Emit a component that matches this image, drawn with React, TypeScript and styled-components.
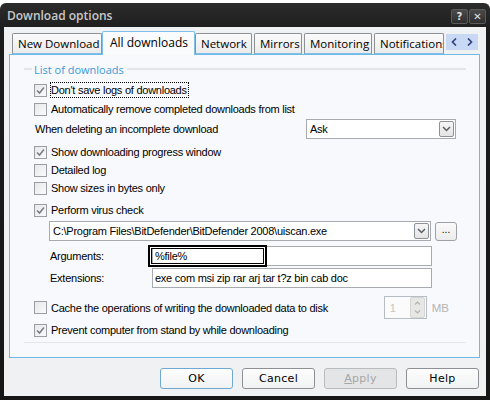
import React from "react";
import styled, { createGlobalStyle } from "styled-components";

const GlobalStyle = createGlobalStyle`
  html, body { margin: 0; padding: 0; background: #ffffff; }
  body {
    font-family: "Liberation Sans", Arial, sans-serif;
    font-size: 11px;
    letter-spacing: -0.25px;
    color: #000;
  }
  #root { width: 490px; height: 400px; overflow: hidden; }
`;

const Backdrop = styled.div`
  width: 490px;
  height: 400px;
  padding-top: 3px;
  box-sizing: border-box;
  background: #ffffff;
`;

const Window = styled.div`
  height: 397px;
  box-sizing: border-box;
  display: flex;
  flex-direction: column;
  background: linear-gradient(#2c2c2c, #1b1b1b 30px, #161616);
  border-radius: 6px 6px 0 0;
  padding: 0 4px 4px 4px;
`;

const TitleBar = styled.div`
  height: 24px;
  display: flex;
  align-items: center;
  justify-content: space-between;
`;

const Title = styled.span`
  font-family: "Open Sans", "Noto Sans", sans-serif;
  font-weight: 600;
  font-size: 12px;
  letter-spacing: 0;
  color: #c9c9c9;
  padding-left: 3px;
`;

const Caption = styled.div`
  display: flex;
  gap: 1px;
  padding-top: 2px;
`;

const CaptionButton = styled.div`
  width: 17px;
  height: 15px;
  box-sizing: border-box;
  border: 1px solid #5a5a5a;
  border-radius: 2px;
  background: linear-gradient(#4a4a4a, #2e2e2e);
  color: #e0e0e0;
  font-family: "DejaVu Sans", sans-serif;
  font-size: 10px;
  font-weight: bold;
  letter-spacing: 0;
  display: flex;
  align-items: center;
  justify-content: center;
`;

const Client = styled.div`
  flex: 1;
  background: #f0f1f3;
  padding: 4px 6px 0 5px;
  display: flex;
  flex-direction: column;
`;

const TabStrip = styled.div`
  height: 23px;
  display: flex;
  align-items: flex-end;
  padding-left: 3px;
  position: relative;
  z-index: 1;
`;

const Tab = styled.div<{ $active?: boolean; $width: number }>`
  width: ${(p) => p.$width}px;
  height: ${(p) => (p.$active ? 24 : 21)}px;
  box-sizing: border-box;
  margin-right: ${(p) => (p.$active ? 0 : 2)}px;
  margin-left: ${(p) => (p.$active ? -2 : 0)}px;
  margin-bottom: ${(p) => (p.$active ? -1 : 0)}px;
  border: 1px solid ${(p) => (p.$active ? "#7ec0ea" : "#8d9196")};
  border-bottom: ${(p) => (p.$active ? "none" : "1px solid #7ec0ea")};
  border-radius: 2px 2px 0 0;
  background: ${(p) =>
    p.$active ? "#fafbfd" : "linear-gradient(#fbfbfb, #ebebeb)"};
  font-family: "Open Sans", "Noto Sans", sans-serif;
  font-size: ${(p) => (p.$active ? 12 : 11.5)}px;
  letter-spacing: 0;
  display: flex;
  align-items: ${(p) => (p.$active ? "flex-start" : "center")};
  padding: ${(p) => (p.$active ? "2px 0 0 7px" : "0 0 0 5px")};
  white-space: nowrap;
  overflow: hidden;
  flex-shrink: 0;
`;

const TabScroll = styled.div`
  width: 32px;
  height: 16px;
  margin-bottom: 4px;
  background: #c9d9f5;
  display: flex;
  align-items: center;
  justify-content: space-around;
  flex-shrink: 0;
`;

const Panel = styled.div`
  height: 304px;
  box-sizing: border-box;
  border: 1px solid #6fb9e8;
  background: #f8f9fc;
  padding: 7px 13px 0 14px;
`;

const Group = styled.div`
  border-bottom: 1px solid #e3e5e8;
  padding-bottom: 3px;
`;

const Legend = styled.div`
  height: 14px;
  display: flex;
  align-items: center;
  color: #3a9ad9;
  font-family: "Open Sans", "Noto Sans", sans-serif;
  font-size: 11px;
  letter-spacing: 0;
`;

const LegendLine = styled.div<{ $grow?: boolean }>`
  height: 2px;
  background: #e2e4e7;
  width: 8px;
  flex: ${(p) => (p.$grow ? 1 : "none")};
  margin: ${(p) => (p.$grow ? "0 0 0 3px" : "0 2px 0 0")};
`;

const Body = styled.div`
  padding: 5px 0 0 10px;
  display: flex;
  flex-direction: column;
`;

const Row = styled.div<{ $h?: number; $mt?: number; $indent?: number; $pr?: number }>`
  height: ${(p) => p.$h ?? 18}px;
  margin-top: ${(p) => p.$mt ?? 0}px;
  padding-left: ${(p) => p.$indent ?? 0}px;
  padding-right: ${(p) => p.$pr ?? 0}px;
  display: flex;
  align-items: center;
  position: relative;
`;

const Box = styled.span`
  width: 13px;
  height: 13px;
  box-sizing: border-box;
  border: 1px solid #9a9ea3;
  background: linear-gradient(135deg, #e6e8ea, #fafafa);
  display: inline-flex;
  align-items: center;
  justify-content: center;
  margin-right: 3px;
  flex-shrink: 0;
`;

const Label = styled.span<{ $focus?: boolean; $w?: number }>`
  border: 1px ${(p) => (p.$focus ? "dotted #000" : "solid transparent")};
  padding: 0 1px 0 0;
  line-height: 14px;
  white-space: nowrap;
  width: ${(p) => (p.$w ? `${p.$w}px` : "auto")};
  flex-shrink: 0;
`;

const Spacer = styled.div`
  flex: 1;
`;

const Combo = styled.div<{ $w: number }>`
  width: ${(p) => p.$w}px;
  height: 20px;
  box-sizing: border-box;
  border: 1px solid #a7abb0;
  background: #fff;
  display: flex;
  align-items: center;
  padding-left: 3px;
  white-space: nowrap;
  overflow: hidden;
`;

const ComboText = styled.span`
  flex: 1;
  overflow: hidden;
`;

const DropButton = styled.span`
  width: 15px;
  height: 16px;
  box-sizing: border-box;
  margin-right: 1px;
  border: 1px solid #8c9196;
  border-radius: 2px;
  background: linear-gradient(#f6f6f6, #e4e4e4);
  display: flex;
  align-items: center;
  justify-content: center;
`;

const SmallButton = styled.div`
  width: 22px;
  height: 19px;
  box-sizing: border-box;
  margin-left: 4px;
  border: 1px solid #9da1a6;
  border-radius: 3px;
  background: linear-gradient(#fafafa, #ececec);
  display: flex;
  align-items: center;
  justify-content: center;
  font-size: 10px;
  letter-spacing: 0;
  padding-bottom: 3px;
`;

const Field = styled.div`
  width: 280px;
  height: 20px;
  box-sizing: border-box;
  border: 1px solid #a7abb0;
  background: #fff;
  display: flex;
  align-items: center;
  padding-left: 2px;
  white-space: nowrap;
`;

const FocusFrame = styled.div`
  position: absolute;
  left: 114px;
  top: -1px;
  width: 119px;
  height: 22px;
  box-sizing: border-box;
  border: 2px solid #000;
  box-shadow: inset 0 0 0 1px #fff, inset 0 0 0 2px #000;
  pointer-events: none;
`;

const Spin = styled.div`
  width: 43px;
  height: 23px;
  box-sizing: border-box;
  border: 1px solid #b7bdc4;
  background: #fbfbfb;
  display: flex;
  align-items: center;
  color: #c4c4c4;
  padding-left: 5px;
`;

const SpinButtons = styled.div`
  margin-left: auto;
  width: 13px;
  height: 19px;
  margin-right: 1px;
  border-radius: 2px;
  background: #e7e8e6;
  border: 1px solid #d5d6d4;
  display: flex;
  flex-direction: column;
  align-items: center;
  justify-content: space-around;
`;

const Unit = styled.span`
  color: #b4b4b4;
  margin-left: 5px;
  font-size: 11.5px;
  letter-spacing: 0;
`;

const ButtonRow = styled.div`
  display: flex;
  justify-content: flex-end;
  gap: 9px;
  padding-top: 10px;
  padding-right: 1px;
`;

const Button = styled.div<{ $default?: boolean; $disabled?: boolean }>`
  width: 73px;
  height: 21px;
  box-sizing: border-box;
  border: 1px solid
    ${(p) => (p.$default ? "#6fa9d2" : p.$disabled ? "#b9bcbf" : "#8d9196")};
  border-radius: 3px;
  background: ${(p) =>
    p.$disabled ? "#e4e5e6" : "linear-gradient(#fdfdfd, #f1f2f3)"};
  color: ${(p) => (p.$disabled ? "#a4a6a8" : "#000")};
  font-family: "DejaVu Sans", "Liberation Sans", sans-serif;
  font-size: 11px;
  display: flex;
  align-items: center;
  justify-content: center;
  letter-spacing: 0.3px;
`;

const Check = () => (
  <svg width="9" height="9" viewBox="0 0 9 9">
    <path d="M1 4.5 L3.5 7 L8 1.5" fill="none" stroke="#7b7f84" strokeWidth="1.6" />
  </svg>
);

const Chevron = () => (
  <svg width="9" height="6" viewBox="0 0 9 6">
    <path d="M1 1 L4.5 4.5 L8 1" fill="none" stroke="#5a5f66" strokeWidth="1.5" />
  </svg>
);

const Arrow = ({ dir }: { dir: "left" | "right" | "up" | "down" }) => {
  const paths = {
    left: "M5 0.5 L1.5 4 L5 7.5",
    right: "M1 0.5 L4.5 4 L1 7.5",
    up: "M1 3.5 L3.5 1 L6 3.5",
    down: "M1 0.5 L3.5 3 L6 0.5",
  };
  const horizontal = dir === "left" || dir === "right";
  return (
    <svg
      width={horizontal ? 6 : 7}
      height={horizontal ? 8 : 4}
      viewBox={horizontal ? "0 0 6 8" : "0 0 7 4"}
    >
      <path
        d={paths[dir]}
        fill="none"
        stroke={horizontal ? "#2d3f7a" : "#b0b2b0"}
        strokeWidth={horizontal ? 1.6 : 1.2}
      />
    </svg>
  );
};

const CheckRow = ({
  checked,
  focus,
  children,
  mt,
}: {
  checked?: boolean;
  focus?: boolean;
  children: React.ReactNode;
  mt?: number;
}) => (
  <Row $mt={mt}>
    <Box>{checked && <Check />}</Box>
    <Label $focus={focus}>{children}</Label>
  </Row>
);

const tabs = [
  { label: "New Download", width: 90 },
  { label: "All downloads", width: 93, active: true },
  { label: "Network", width: 57 },
  { label: "Mirrors", width: 48 },
  { label: "Monitoring", width: 68 },
  { label: "Notifications", width: 70 },
];

export default function App() {
  return (
    <Backdrop>
      <GlobalStyle />
      <Window>
        <TitleBar>
          <Title>Download options</Title>
          <Caption>
            <CaptionButton>?</CaptionButton>
            <CaptionButton>✕</CaptionButton>
          </Caption>
        </TitleBar>
        <Client>
          <TabStrip>
            {tabs.map((t) => (
              <Tab key={t.label} $active={t.active} $width={t.width}>
                {t.label}
              </Tab>
            ))}
            <TabScroll>
              <Arrow dir="left" />
              <Arrow dir="right" />
            </TabScroll>
          </TabStrip>
          <Panel>
            <Group>
              <Legend>
                <LegendLine />
                List of downloads
                <LegendLine $grow />
              </Legend>
              <Body>
                <CheckRow checked focus>
                  Don't save logs of downloads
                </CheckRow>
                <CheckRow mt={1}>Automatically remove completed downloads from list</CheckRow>
                <Row $h={20} $mt={1} $pr={10}>
                  <Label>When deleting an incomplete download</Label>
                  <Spacer />
                  <Combo $w={150}>
                    <ComboText>Ask</ComboText>
                    <DropButton>
                      <Chevron />
                    </DropButton>
                  </Combo>
                </Row>
                <CheckRow checked mt={4}>
                  Show downloading progress window
                </CheckRow>
                <CheckRow>Detailed log</CheckRow>
                <CheckRow>Show sizes in bytes only</CheckRow>
                <CheckRow checked mt={4}>
                  Perform virus check
                </CheckRow>
                <Row $h={20} $mt={2} $indent={15}>
                  <Combo $w={382}>
                    <ComboText>C:\Program Files\BitDefender\BitDefender 2008\uiscan.exe</ComboText>
                    <DropButton>
                      <Chevron />
                    </DropButton>
                  </Combo>
                  <SmallButton>...</SmallButton>
                </Row>
                <Row $h={20} $mt={5} $indent={15}>
                  <Label $w={100}>Arguments:</Label>
                  <Field>%file%</Field>
                  <FocusFrame />
                </Row>
                <Row $h={20} $mt={2} $indent={15}>
                  <Label $w={100}>Extensions:</Label>
                  <Field>exe com msi zip rar arj tar t?z bin cab doc</Field>
                </Row>
                <Row $h={23} $mt={8} $pr={17}>
                  <Box />
                  <Label>Cache the operations of writing the downloaded data to disk</Label>
                  <Spacer />
                  <Spin>
                    1
                    <SpinButtons>
                      <Arrow dir="up" />
                      <Arrow dir="down" />
                    </SpinButtons>
                  </Spin>
                  <Unit>MB</Unit>
                </Row>
                <CheckRow checked mt={2}>
                  Prevent computer from stand by while downloading
                </CheckRow>
              </Body>
            </Group>
          </Panel>
          <ButtonRow>
            <Button $default>OK</Button>
            <Button>Cancel</Button>
            <Button $disabled>
              <span>
                <u>A</u>pply
              </span>
            </Button>
            <Button>Help</Button>
          </ButtonRow>
        </Client>
      </Window>
    </Backdrop>
  );
}
